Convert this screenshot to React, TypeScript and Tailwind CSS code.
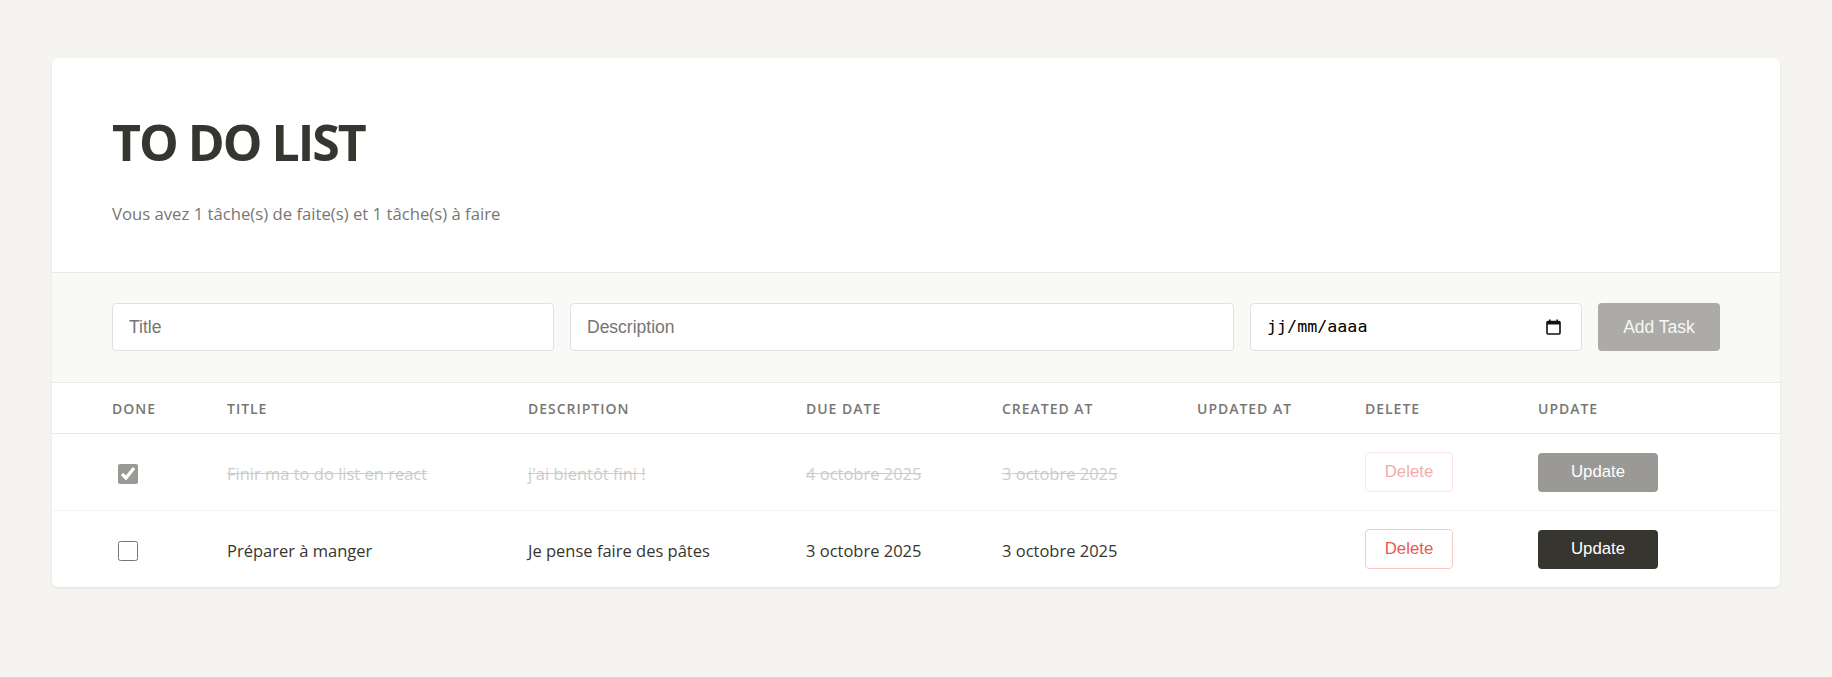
import { useState } from "react";

interface Task {
	id: number;
	title: string;
	description: string;
	dueDate: string;
	createdAt: string;
	updatedAt: string;
	done: boolean;
}

const initialTasks: Task[] = [
	{
		id: 1,
		title: "Finir ma to do list en react",
		description: "j'ai bientôt fini !",
		dueDate: "4 octobre 2025",
		createdAt: "3 octobre 2025",
		updatedAt: "",
		done: true,
	},
	{
		id: 2,
		title: "Préparer à manger",
		description: "Je pense faire des pâtes",
		dueDate: "3 octobre 2025",
		createdAt: "3 octobre 2025",
		updatedAt: "",
		done: false,
	},
];

const columns = [
	"Done",
	"Title",
	"Description",
	"Due date",
	"Created at",
	"Updated at",
	"Delete",
	"Update",
];

const gridCols =
	"grid grid-cols-[115px_301px_278px_196px_195px_168px_173px_1fr] pl-[60px] pr-[60px]";

function CalendarIcon() {
	return (
		<svg width="15" height="16" viewBox="0 0 15 16" fill="none" aria-hidden="true">
			<rect x="3" y="0.5" width="1.6" height="3" fill="#111" />
			<rect x="10.4" y="0.5" width="1.6" height="3" fill="#111" />
			<rect x="1" y="2.5" width="13" height="12.5" rx="1" stroke="#111" strokeWidth="1.6" />
			<rect x="1" y="2.5" width="13" height="3" fill="#111" />
		</svg>
	);
}

export default function App() {
	const [tasks, setTasks] = useState<Task[]>(initialTasks);

	const doneCount = tasks.filter((task) => task.done).length;
	const todoCount = tasks.length - doneCount;

	function handleToggle(id: number) {
		setTasks((prev) =>
			prev.map((task) => (task.id === id ? { ...task, done: !task.done } : task)),
		);
	}

	function handleDelete(id: number) {
		setTasks((prev) => prev.filter((task) => task.id !== id));
	}

	// texte barré quand la tâche est faite
	const cellText = (done: boolean) => (done ? "pt-1 text-[#9b9a97] line-through" : "pt-1");

	return (
		<div className="min-h-screen bg-[#f5f4f0] px-[52px] pt-[58px] pb-[88px] font-['Open_Sans',sans-serif] text-[16.5px] text-[#37352f]">
			<div className="rounded-[6px] bg-white shadow-[0_1px_3px_rgba(0,0,0,0.08)]">
				<header className="border-b border-[#e9e9e7] px-[60px] pt-[54px] pb-[46px]">
					<h1 className="text-[50px] leading-[1.2] font-bold tracking-[-0.04em] text-[#37352f]">
						TO DO LIST
					</h1>
					<p className="mt-[30px] text-[16.7px] leading-6 text-[#787774]">
						Vous avez {doneCount} tâche(s) de faite(s) et {todoCount} tâche(s) à faire
					</p>
				</header>

				<form
					className="flex gap-4 border-b border-[#e9e9e7] bg-[#f9f9f7] px-[60px] pt-[30px] pb-[31px] font-['Liberation_Sans',Arial,sans-serif]"
					onSubmit={(event) => event.preventDefault()}
				>
					<input
						placeholder="Title"
						className="h-12 w-[442px] shrink-0 rounded-[4px] border border-[#e1e1df] bg-white px-4 text-[17.5px] placeholder:text-[#757575] outline-none"
					/>
					<input
						placeholder="Description"
						className="h-12 w-[664px] shrink-0 rounded-[4px] border border-[#e1e1df] bg-white px-4 text-[17.5px] placeholder:text-[#757575] outline-none"
					/>
					<div className="flex h-12 w-[332px] shrink-0 items-center justify-between rounded-[4px] border border-[#e1e1df] bg-white pr-[20px] pl-4">
						<span className="font-['DejaVu_Sans_Mono',monospace] text-[16.7px] text-black">
							jj/mm/aaaa
						</span>
						<CalendarIcon />
					</div>
					<button
						type="submit"
						className="h-12 min-w-0 flex-1 rounded-[4px] bg-[#acaba7] text-[17.5px] text-[#f7f7f6]"
					>
						Add Task
					</button>
				</form>

				<div className={`${gridCols} h-[51px] items-center border-b border-[#e9e9e7]`}>
					{columns.map((column) => (
						<div
							key={column}
							className="text-[14px] font-semibold tracking-[0.07em] text-[#787774] uppercase"
						>
							{column}
						</div>
					))}
				</div>

				{tasks.map((task, index) => (
					<div
						key={task.id}
						className={`${gridCols} items-center ${
							index < tasks.length - 1 ? "h-[77px] border-b border-[#e9e9e7]" : "h-[76px]"
						} ${task.done ? "opacity-50" : ""}`}
					>
						<div className="flex items-center">
							<input
								type="checkbox"
								checked={task.done}
								onChange={() => handleToggle(task.id)}
								className="mt-[3px] ml-[6px] h-5 w-5 accent-[#37352f]"
							/>
						</div>
						<div className={cellText(task.done)}>{task.title}</div>
						<div className={cellText(task.done)}>{task.description}</div>
						<div className={cellText(task.done)}>{task.dueDate}</div>
						<div className={cellText(task.done)}>{task.createdAt}</div>
						<div>{task.updatedAt}</div>
						<div>
							<button
								type="button"
								onClick={() => handleDelete(task.id)}
								className="h-10 w-[88px] rounded-[4px] border border-[#f8c9c9] bg-white font-['Liberation_Sans',Arial,sans-serif] text-[16.8px] text-[#eb5757]"
							>
								Delete
							</button>
						</div>
						<div>
							<button
								type="button"
								className="h-[39px] w-[120px] rounded-[4px] bg-[#37352f] font-['Liberation_Sans',Arial,sans-serif] text-[16.8px] text-white"
							>
								Update
							</button>
						</div>
					</div>
				))}
			</div>
		</div>
	);
}
